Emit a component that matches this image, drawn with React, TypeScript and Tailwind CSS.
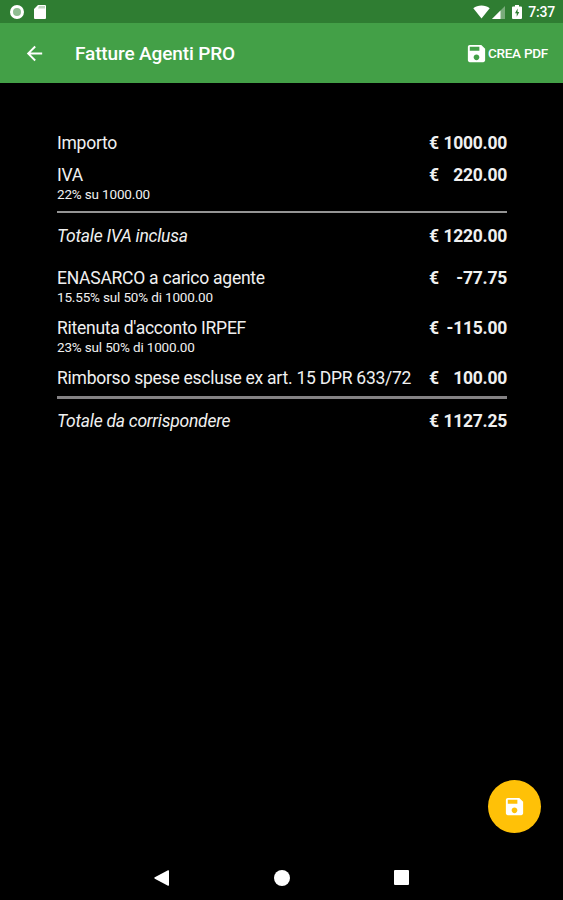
import type { ReactNode } from "react";

interface RowProps {
  label: string;
  amount: string;
  detail?: string;
  total?: boolean;
  className?: string;
}

function SaveIcon({ className = "" }: { className?: string }) {
  return (
    <svg viewBox="0 0 24 24" fill="currentColor" className={className}>
      <path d="M17 3H5c-1.11 0-2 .9-2 2v14c0 1.1.89 2 2 2h14c1.1 0 2-.9 2-2V7l-4-4zm-5 16c-1.66 0-3-1.34-3-3s1.34-3 3-3 3 1.34 3 3-1.34 3-3 3zm3-10H5V5h10v4z" />
    </svg>
  );
}

function StatusBar() {
  return (
    <div className="flex h-[23px] items-center justify-between bg-[#2f7d32] pl-[10px] pr-[8px] pt-px">
      <div className="flex items-center gap-[10px]">
        <span className="size-[14px] rounded-full border-[3px] border-white bg-[#8fbd91]" />
        <svg viewBox="0 0 12 14" className="h-[14px] w-[12px]">
          <path d="M4 0h7a1 1 0 0 1 1 1v12a1 1 0 0 1-1 1H1a1 1 0 0 1-1-1V4z" fill="#fff" />
          <path d="M5 1h6v2.500H4z" fill="#c3d6c3" />
        </svg>
      </div>
      <div className="flex items-center">
        <svg viewBox="0 0 17 14" className="h-[14px] w-[17px]" fill="#fff">
          <path d="M8.500 13.500L.3 3.300C2.500 1.400 5.400.5 8.500.5s6 .9 8.200 2.800z" />
        </svg>
        <svg viewBox="0 0 13 13" className="ml-[2px] h-[13px] w-[13px]">
          <path d="M0 13L13 0v13z" fill="#79ab7b" />
          <path d="M0 13l8.500-8.500V13z" fill="#fff" />
        </svg>
        <svg viewBox="0 0 10 14" className="ml-[7px] h-[14px] w-[10px]">
          <path d="M3 0h4v1.500h2a1 1 0 0 1 1 1V13a1 1 0 0 1-1 1H1a1 1 0 0 1-1-1V2.500a1 1 0 0 1 1-1h2z" fill="#fff" />
          <path d="M5.600 3.500L3 8.300h1.700v3.500l2.600-4.800H5.600z" fill="#2f7d32" />
        </svg>
        <span className="ml-[6px] text-[14px] font-medium leading-none tracking-[-0.2px]">7:37</span>
      </div>
    </div>
  );
}

function AppBar() {
  return (
    <header className="flex h-[60px] items-center bg-[#43a047] pl-[23px] pr-[15px]">
      <svg viewBox="0 0 24 24" fill="currentColor" className="size-[23px]">
        <path d="M20 11H7.830l5.590-5.590L12 4l-8 8 8 8 1.410-1.410L7.830 13H20v-2z" />
      </svg>
      <h1 className="ml-[29px] pt-[3px] text-[19px] font-medium tracking-[-0.12px]">Fatture Agenti PRO</h1>
      <button className="ml-auto flex items-center text-[13.500px] font-medium tracking-[-0.25px]">
        <SaveIcon className="size-[23px]" />
        <span className="pt-px">CREA PDF</span>
      </button>
    </header>
  );
}

function Row({ label, amount, detail, total, className = "" }: RowProps) {
  return (
    <div className={className}>
      <div className="flex justify-between text-[17.500px] leading-5 tracking-[-0.25px]">
        <span className={total ? "italic" : ""}>{label}</span>
        <span className="flex w-[78px] justify-between font-bold">
          <span>€</span>
          <span>{amount}</span>
        </span>
      </div>
      {detail && <p className="text-[13.500px] leading-[19px] tracking-[-0.16px]">{detail}</p>}
    </div>
  );
}

function Section({ children, className = "" }: { children: ReactNode; className?: string }) {
  return <section className={className}>{children}</section>;
}

export default function App() {
  return (
    <div className="flex h-[900px] w-[563px] flex-col bg-black font-['Roboto',sans-serif] text-white">
      <StatusBar />
      <AppBar />

      <main className="flex-1 pl-[57px] pr-[56px] pt-[50px] text-[#f0f0f0]">
        <Section>
          <Row label="Importo" amount="1000.00" />
          <Row label="IVA" amount="220.00" detail="22% su 1000.00" className="mt-3" />
          <hr className="mt-[7px] h-[2px] border-0 bg-[#949494]" />
          <Row label="Totale IVA inclusa" amount="1220.00" total className="mt-[13px]" />
        </Section>

        <Section className="mt-[22px]">
          <Row label="ENASARCO a carico agente" amount="-77.75" detail="15.55% sul 50% di 1000.00" />
          <Row label="Ritenuta d'acconto IRPEF" amount="-115.00" detail="23% sul 50% di 1000.00" className="mt-[11px]" />
          <Row label="Rimborso spese escluse ex art. 15 DPR 633/72" amount="100.00" className="mt-[11px]" />
          <hr className="mt-[8px] h-[3px] border-0 bg-[#848284]" />
          <Row label="Totale da corrispondere" amount="1127.25" total className="mt-3" />
        </Section>
      </main>

      <button className="mb-[22px] mr-[22px] flex size-[53px] items-center justify-center self-end rounded-full bg-[#ffc107]">
        <SaveIcon className="size-[23px]" />
      </button>

      <nav className="flex h-[45px] items-center justify-between pl-[154px] pr-[154px]">
        <svg viewBox="0 0 16 16" className="size-4" fill="#fff">
          <path d="M.8 7.300L14 .3q1-.4 1 .6v14.200q0 1-1 .6L.8 8.700q-1-.7 0-1.400z" />
        </svg>
        <span className="size-4 rounded-full bg-white" />
        <span className="size-[15px] rounded-[1px] bg-white" />
      </nav>
    </div>
  );
}
